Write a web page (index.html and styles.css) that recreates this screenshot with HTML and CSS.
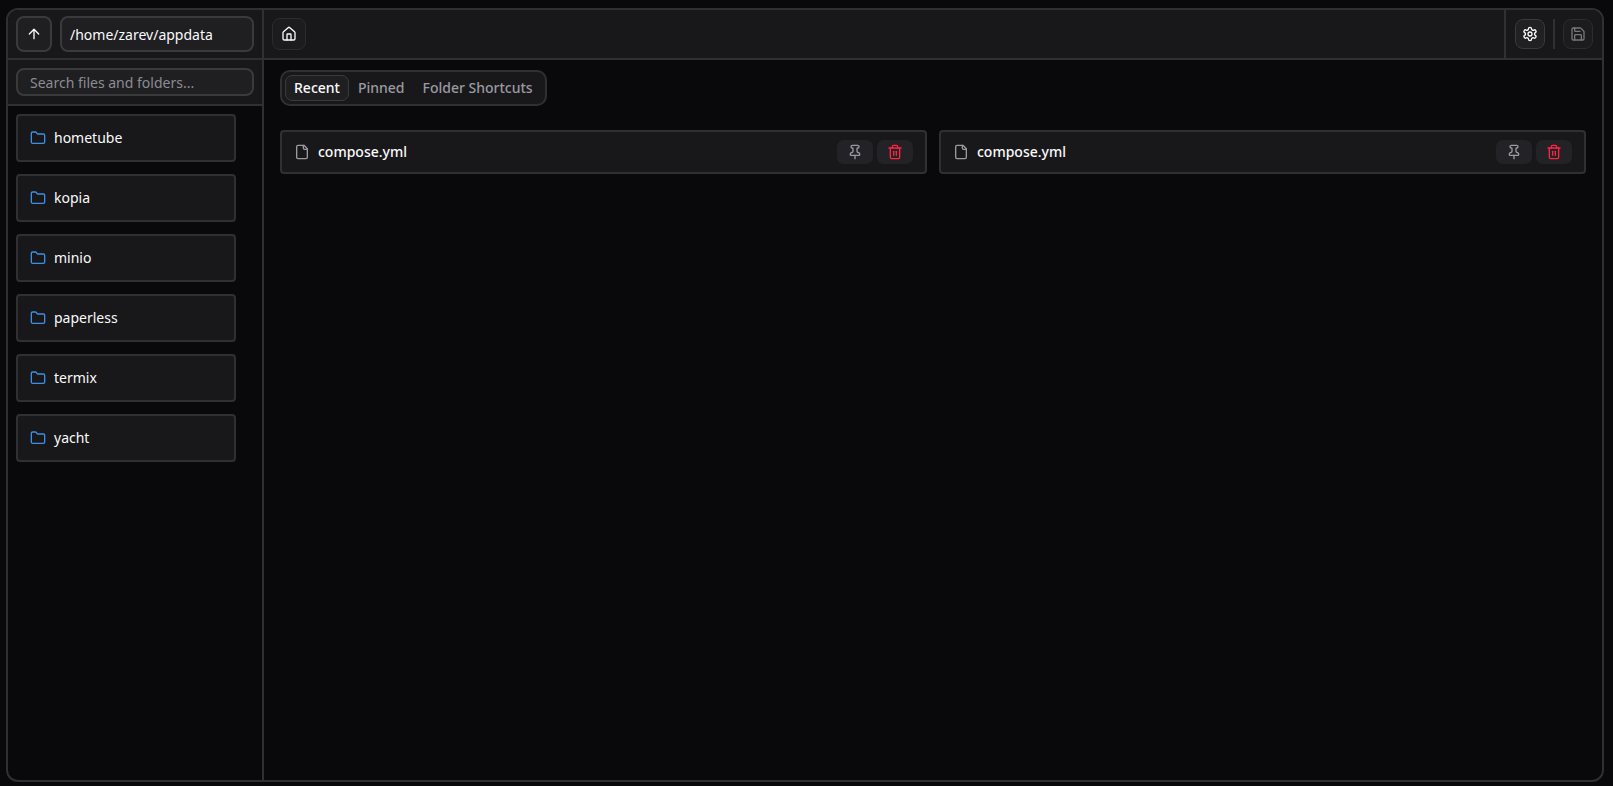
FILE: index.html
```html
<!DOCTYPE html>
<html lang="en">
<head>
<meta charset="utf-8">
<title>File Manager</title>
<link rel="stylesheet" href="styles.css">
</head>
<body>
<div class="frame">
  <aside class="side">
    <div class="pathbar">
      <button class="btn-up"><svg class="i16" viewBox="0 0 24 24"><path d="m5 12 7-7 7 7"/><path d="M12 19V5"/></svg></button>
      <div class="path">/home/zarev/appdata</div>
    </div>
    <div class="searchbar"><div class="search">Search files and folders...</div></div>
    <div class="folders">
      <div class="folder"><svg class="i16 blue" viewBox="0 0 24 24"><path d="M20 20a2 2 0 0 0 2-2V8a2 2 0 0 0-2-2h-7.9a2 2 0 0 1-1.69-.9L9.6 3.9A2 2 0 0 0 7.93 3H4a2 2 0 0 0-2 2v13a2 2 0 0 0 2 2Z"/></svg><span class="fold-name">hometube</span></div>
      <div class="folder"><svg class="i16 blue" viewBox="0 0 24 24"><path d="M20 20a2 2 0 0 0 2-2V8a2 2 0 0 0-2-2h-7.9a2 2 0 0 1-1.69-.9L9.6 3.9A2 2 0 0 0 7.93 3H4a2 2 0 0 0-2 2v13a2 2 0 0 0 2 2Z"/></svg><span class="fold-name">kopia</span></div>
      <div class="folder"><svg class="i16 blue" viewBox="0 0 24 24"><path d="M20 20a2 2 0 0 0 2-2V8a2 2 0 0 0-2-2h-7.9a2 2 0 0 1-1.69-.9L9.6 3.9A2 2 0 0 0 7.93 3H4a2 2 0 0 0-2 2v13a2 2 0 0 0 2 2Z"/></svg><span class="fold-name">minio</span></div>
      <div class="folder"><svg class="i16 blue" viewBox="0 0 24 24"><path d="M20 20a2 2 0 0 0 2-2V8a2 2 0 0 0-2-2h-7.9a2 2 0 0 1-1.69-.9L9.6 3.9A2 2 0 0 0 7.93 3H4a2 2 0 0 0-2 2v13a2 2 0 0 0 2 2Z"/></svg><span class="fold-name">paperless</span></div>
      <div class="folder"><svg class="i16 blue" viewBox="0 0 24 24"><path d="M20 20a2 2 0 0 0 2-2V8a2 2 0 0 0-2-2h-7.9a2 2 0 0 1-1.69-.9L9.6 3.9A2 2 0 0 0 7.93 3H4a2 2 0 0 0-2 2v13a2 2 0 0 0 2 2Z"/></svg><span class="fold-name">termix</span></div>
      <div class="folder"><svg class="i16 blue" viewBox="0 0 24 24"><path d="M20 20a2 2 0 0 0 2-2V8a2 2 0 0 0-2-2h-7.9a2 2 0 0 1-1.69-.9L9.6 3.9A2 2 0 0 0 7.93 3H4a2 2 0 0 0-2 2v13a2 2 0 0 0 2 2Z"/></svg><span class="fold-name">yacht</span></div>
    </div>
  </aside>
  <main class="main">
    <header class="top">
      <div class="top-left">
        <button class="btn-sq btn-home"><svg class="i16" viewBox="0 0 24 24"><path d="M15 21v-8a1 1 0 0 0-1-1h-4a1 1 0 0 0-1 1v8"/><path d="M3 10a2 2 0 0 1 .709-1.528l7-5.999a2 2 0 0 1 2.582 0l7 5.999A2 2 0 0 1 21 10v9a2 2 0 0 1-2 2H5a2 2 0 0 1-2-2z"/></svg></button>
      </div>
      <div class="top-right">
        <button class="btn-sq btn-lit"><svg class="i16" viewBox="0 0 24 24"><path d="M12.22 2h-.44a2 2 0 0 0-2 2v.18a2 2 0 0 1-1 1.73l-.43.25a2 2 0 0 1-2 0l-.15-.08a2 2 0 0 0-2.73.73l-.22.38a2 2 0 0 0 .73 2.73l.15.1a2 2 0 0 1 1 1.72v.51a2 2 0 0 1-1 1.74l-.15.09a2 2 0 0 0-.73 2.73l.22.38a2 2 0 0 0 2.73.73l.15-.08a2 2 0 0 1 2 0l.43.25a2 2 0 0 1 1 1.73V20a2 2 0 0 0 2 2h.44a2 2 0 0 0 2-2v-.18a2 2 0 0 1 1-1.73l.43-.25a2 2 0 0 1 2 0l.15.08a2 2 0 0 0 2.73-.73l.22-.39a2 2 0 0 0-.73-2.73l-.15-.08a2 2 0 0 1-1-1.74v-.5a2 2 0 0 1 1-1.74l.15-.09a2 2 0 0 0 .73-2.73l-.22-.38a2 2 0 0 0-2.73-.73l-.15.08a2 2 0 0 1-2 0l-.43-.25a2 2 0 0 1-1-1.73V4a2 2 0 0 0-2-2z"/><circle cx="12" cy="12" r="3"/></svg></button>
        <span class="sep"></span>
        <button class="btn-sq btn-dim"><svg class="i16" viewBox="0 0 24 24"><path d="M15.2 3a2 2 0 0 1 1.4.6l3.8 3.8a2 2 0 0 1 .6 1.4V19a2 2 0 0 1-2 2H5a2 2 0 0 1-2-2V5a2 2 0 0 1 2-2z"/><path d="M17 21v-7a1 1 0 0 0-1-1H8a1 1 0 0 0-1 1v7"/><path d="M7 3v4a1 1 0 0 0 1 1h7"/></svg></button>
      </div>
    </header>
    <section class="content">
      <div class="tabs">
        <span class="tab active">Recent</span>
        <span class="tab">Pinned</span>
        <span class="tab">Folder Shortcuts</span>
      </div>
      <div class="files">
        <div class="file">
          <svg class="i16 grey" viewBox="0 0 24 24"><path d="M15 2H6a2 2 0 0 0-2 2v16a2 2 0 0 0 2 2h12a2 2 0 0 0 2-2V7Z"/><path d="M14 2v4a2 2 0 0 0 2 2h4"/></svg>
          <span class="fname">compose.yml</span>
          <button class="act"><svg class="i16 grey" viewBox="0 0 24 24"><path d="M12 17v5"/><path d="M9 10.76a2 2 0 0 1-1.11 1.79l-1.78.9A2 2 0 0 0 5 15.24V16a1 1 0 0 0 1 1h12a1 1 0 0 0 1-1v-.76a2 2 0 0 0-1.11-1.79l-1.78-.9A2 2 0 0 1 15 10.76V7a1 1 0 0 1 1-1 2 2 0 0 0 0-4H8a2 2 0 0 0 0 4 1 1 0 0 1 1 1z"/></svg></button>
          <button class="act"><svg class="i16 red" viewBox="0 0 24 24"><path d="M3 6h18"/><path d="M19 6v14c0 1-1 2-2 2H7c-1 0-2-1-2-2V6"/><path d="M8 6V4c0-1 1-2 2-2h4c1 0 2 1 2 2v2"/><line x1="10" x2="10" y1="11" y2="17"/><line x1="14" x2="14" y1="11" y2="17"/></svg></button>
        </div>
        <div class="file">
          <svg class="i16 grey" viewBox="0 0 24 24"><path d="M15 2H6a2 2 0 0 0-2 2v16a2 2 0 0 0 2 2h12a2 2 0 0 0 2-2V7Z"/><path d="M14 2v4a2 2 0 0 0 2 2h4"/></svg>
          <span class="fname">compose.yml</span>
          <button class="act"><svg class="i16 grey" viewBox="0 0 24 24"><path d="M12 17v5"/><path d="M9 10.76a2 2 0 0 1-1.11 1.79l-1.78.9A2 2 0 0 0 5 15.24V16a1 1 0 0 0 1 1h12a1 1 0 0 0 1-1v-.76a2 2 0 0 0-1.11-1.79l-1.78-.9A2 2 0 0 1 15 10.76V7a1 1 0 0 1 1-1 2 2 0 0 0 0-4H8a2 2 0 0 0 0 4 1 1 0 0 1 1 1z"/></svg></button>
          <button class="act"><svg class="i16 red" viewBox="0 0 24 24"><path d="M3 6h18"/><path d="M19 6v14c0 1-1 2-2 2H7c-1 0-2-1-2-2V6"/><path d="M8 6V4c0-1 1-2 2-2h4c1 0 2 1 2 2v2"/><line x1="10" x2="10" y1="11" y2="17"/><line x1="14" x2="14" y1="11" y2="17"/></svg></button>
        </div>
      </div>
    </section>
  </main>
</div>
</body>
</html>
```
FILE: styles.css
```css
* { box-sizing: border-box; }
html, body { height: 100%; }
body {
  margin: 0;
  padding: 8px 9px 4px 6px;
  background: #09090b;
  color: #fafafa;
  font-family: "Noto Sans", sans-serif;
  font-size: 14px;
  overflow: hidden;
}
button { padding: 0; font: inherit; color: inherit; display: flex; align-items: center; justify-content: center; }
.i16 { width: 16px; height: 16px; fill: none; stroke: currentColor; stroke-width: 2; stroke-linecap: round; stroke-linejoin: round; flex: none; }
.blue { color: #3b8fe6; }
.grey { color: #9a9aa0; }
.red { color: #ff2340; }

.frame {
  display: flex;
  height: 774px;
  border: 2px solid #303032;
  border-radius: 12px;
  overflow: hidden;
}
.side {
  width: 256px;
  flex: none;
  border-right: 2px solid #303032;
  display: flex;
  flex-direction: column;
}
.pathbar {
  height: 50px;
  flex: none;
  background: #18181b;
  border-bottom: 2px solid #303032;
  padding: 6px 8px;
  display: flex;
  gap: 8px;
}
.btn-up {
  width: 36px;
  height: 36px;
  background: #1f1f22;
  border: 2px solid #3a3a3d;
  border-radius: 8px;
}
.path {
  flex: 1;
  height: 36px;
  background: #1f1f22;
  border: 2px solid #3a3a3d;
  border-radius: 8px;
  padding: 0 8px;
  line-height: 34px;
}
.searchbar {
  height: 46px;
  flex: none;
  background: #18181b;
  border-bottom: 2px solid #303032;
  padding: 8px 8px 0;
}
.search {
  height: 28px;
  background: #1f1f22;
  border: 2px solid #3a3a3d;
  border-radius: 8px;
  padding: 0 12px;
  line-height: 26px;
  color: #8c8c92;
}
.folders {
  padding: 8px 26px 0 8px;
  display: flex;
  flex-direction: column;
  gap: 12px;
}
.folder {
  height: 48px;
  background: #18181b;
  border: 2px solid #303032;
  border-radius: 4px;
  padding: 0 12px;
  display: flex;
  align-items: center;
  gap: 8px;
}
.fold-name { margin-bottom: 2px; }
.main { flex: 1; min-width: 0; display: flex; flex-direction: column; }
.top {
  height: 50px;
  flex: none;
  background: #18181b;
  border-bottom: 2px solid #303032;
  display: flex;
  justify-content: space-between;
}
.top-left { padding: 8px; }
.top-right {
  border-left: 2px solid #303032;
  padding: 8px 9px 8px 9px;
  display: flex;
  align-items: center;
  gap: 8px;
}
.btn-sq {
  background: #1c1c1f;
  border: 1px solid #2c2c2f;
  border-radius: 8px;
}
.btn-home { width: 34px; height: 32px; }
.top-right .btn-sq { width: 30px; height: 30px; }
.btn-lit { background: #212124; border-color: #3a3a3d; }
.btn-dim { color: #77777c; }
.sep { width: 2px; height: 30px; background: #303032; }
.content { padding: 10px 16px; }
.tabs {
  display: inline-flex;
  height: 36px;
  background: #18181b;
  border: 2px solid #303032;
  border-radius: 10px;
  padding: 3px;
  vertical-align: top;
}
.tab {
  height: 26px;
  padding: 0 8px;
  border: 1px solid transparent;
  border-radius: 7px;
  line-height: 23px;
  font-weight: 500;
  color: #9a9aa0;
}
.tab.active { background: #1f1f22; border-color: #3a3a3d; color: #fafafa; }
.files {
  margin-top: 24px;
  display: grid;
  grid-template-columns: 1fr 1fr;
  gap: 12px;
}
.file {
  height: 44px;
  background: #18181b;
  border: 2px solid #303032;
  border-radius: 4px;
  padding: 0 12px 1px;
  display: flex;
  align-items: center;
  gap: 4px;
}
.fname { flex: 1; margin-left: 4px; font-weight: 500; }
.act {
  width: 36px;
  height: 24px;
  background: #232327;
  border: 0;
  border-radius: 7px;
}
```
